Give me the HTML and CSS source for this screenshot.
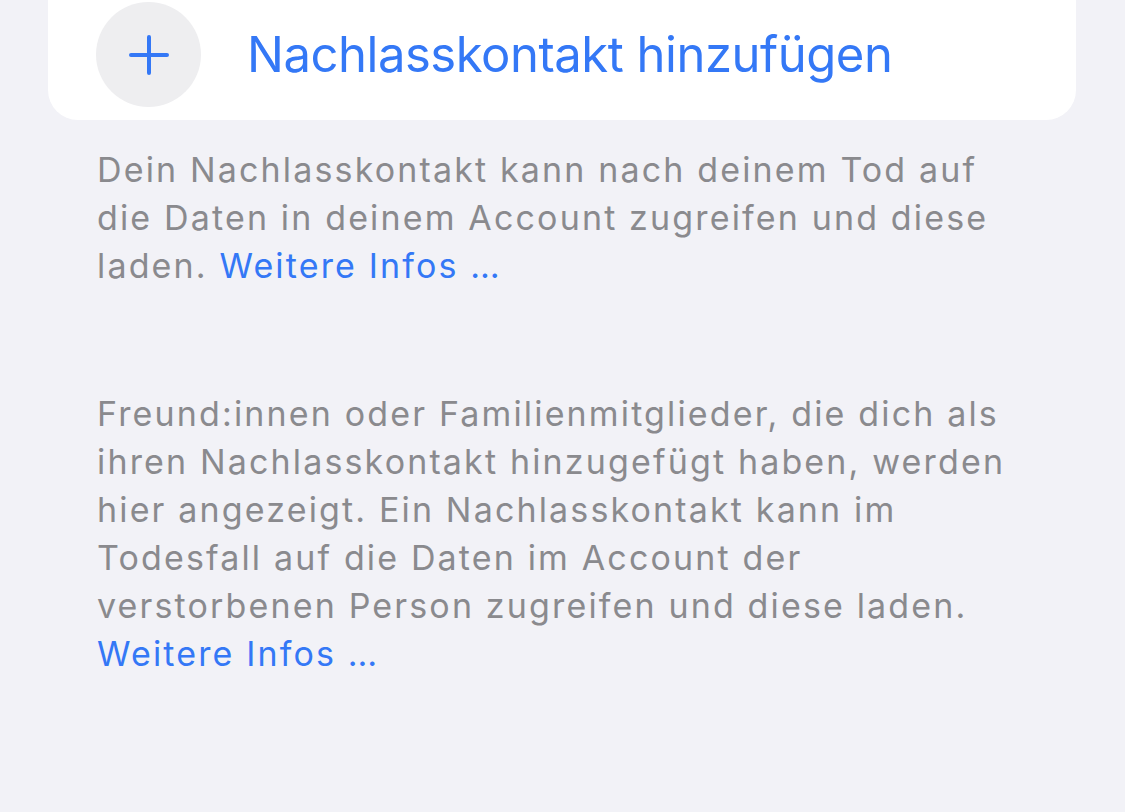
FILE: index.html
```html
<!DOCTYPE html>
<html lang="de">
<head>
<meta charset="utf-8">
<link rel="stylesheet" href="styles.css">
</head>
<body>
<div class="card">
  <div class="row">
    <div class="add-icon">
      <svg width="42" height="42" viewBox="0 0 42 42"><path d="M21 3 V39 M3 21 H39" stroke="#3478f6" stroke-width="4" stroke-linecap="round" fill="none"/></svg>
    </div>
    <span class="row-title">Nachlasskontakt hinzufügen</span>
  </div>
</div>
<p class="footer first">Dein Nachlasskontakt kann nach deinem Tod auf<br>die Daten in deinem Account zugreifen und diese<br>laden. <span class="link">Weitere Infos …</span></p>
<p class="footer second">Freund:innen oder Familienmitglieder, die dich als<br>ihren Nachlasskontakt hinzugefügt haben, werden<br>hier angezeigt. Ein Nachlasskontakt kann im<br>Todesfall auf die Daten im Account der<br>verstorbenen Person zugreifen und diese laden.<br><span class="link">Weitere Infos …</span></p>
</body>
</html>
```
FILE: styles.css
```css
html, body {
  margin: 0;
  padding: 0;
  background: #f2f2f7;
  font-family: Inter, "Noto Sans", sans-serif;
}
body {
  width: 1125px;
  height: 812px;
  overflow: hidden;
}
.card {
  margin-left: 48px;
  width: 1028px;
  height: 120px;
  background: #ffffff;
  border-radius: 0 0 30px 30px;
}
.row {
  display: flex;
  align-items: center;
  height: 109px;
  padding-left: 48px;
}
.add-icon {
  width: 105px;
  height: 105px;
  border-radius: 50%;
  background: #eeeef0;
  display: flex;
  align-items: center;
  justify-content: center;
  flex-shrink: 0;
}
.row-title {
  margin-left: 46px;
  font-size: 49px;
  color: #3478f6;
  letter-spacing: -0.47px;
}
.footer {
  margin: 0;
  padding-left: 97px;
  font-size: 34px;
  line-height: 48px;
  color: #8a8a8e;
  letter-spacing: 2.15px;
}
.first {
  margin-top: 26px;
}
.second {
  margin-top: 100px;
}
.link {
  color: #3478f6;
}
```
